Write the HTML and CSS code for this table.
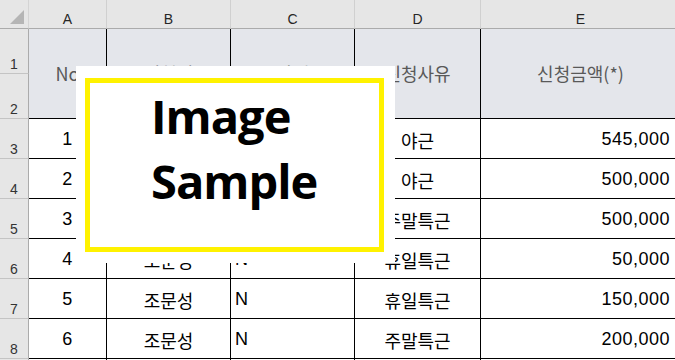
FILE: index.html
```html
<!DOCTYPE html>
<html>
<head>
<meta charset="utf-8">
<link rel="stylesheet" href="styles.css">
</head>
<body>

<!--Sheet-->
<div class="sheet">
  <div class="corner">
    <svg width="16" height="16" viewBox="0 0 16 16"><polygon points="15,1 15,15 1,15" fill="#b5b5b5"/></svg>
  </div>
  <div class="colhead">A</div>
  <div class="colhead">B</div>
  <div class="colhead">C</div>
  <div class="colhead">D</div>
  <div class="colhead">E</div>

  <!--Title rows (merged)-->
  <div class="rownum">1</div>
  <div class="cell hd">No</div>
  <div class="cell hd">신청인</div>
  <div class="cell hd">상태</div>
  <div class="cell hd">신청사유</div>
  <div class="cell hd">신청금액(*)</div>
  <div class="rownum">2</div>

  <!--Data rows-->
  <div class="rownum">3</div>
  <div class="cell center num">1</div>
  <div class="cell center"></div>
  <div class="cell left num"></div>
  <div class="cell center">야근</div>
  <div class="cell right num">545,000</div>

  <div class="rownum">4</div>
  <div class="cell center num">2</div>
  <div class="cell center"></div>
  <div class="cell left num"></div>
  <div class="cell center">야근</div>
  <div class="cell right num">500,000</div>

  <div class="rownum">5</div>
  <div class="cell center num">3</div>
  <div class="cell center"></div>
  <div class="cell left num"></div>
  <div class="cell center">주말특근</div>
  <div class="cell right num">500,000</div>

  <div class="rownum">6</div>
  <div class="cell center num">4</div>
  <div class="cell center">조문성</div>
  <div class="cell left num">N</div>
  <div class="cell center">휴일특근</div>
  <div class="cell right num">50,000</div>

  <div class="rownum">7</div>
  <div class="cell center num">5</div>
  <div class="cell center">조문성</div>
  <div class="cell left num">N</div>
  <div class="cell center">휴일특근</div>
  <div class="cell right num">150,000</div>

  <div class="rownum">8</div>
  <div class="cell center num">6</div>
  <div class="cell center">조문성</div>
  <div class="cell left num">N</div>
  <div class="cell center">주말특근</div>
  <div class="cell right num">200,000</div>

  <!--Next row, only its top edge shows-->
  <div class="rownum"></div>
  <div class="cell"></div>
  <div class="cell"></div>
  <div class="cell"></div>
  <div class="cell"></div>
  <div class="cell"></div>
</div>

<!--Sample image box-->
<div class="sample">
  <div class="sample-frame">
    <div class="sample-text">Image</div>
    <div class="sample-text">Sample</div>
  </div>
</div>

</body>
</html>
```

FILE: styles.css
```css
body {
  margin: 0;
  background-color: #fff;
  overflow: hidden;
  position: relative;
  width: 675px;
  height: 360px;
}

/* The grid of the sheet */
.sheet {
  display: grid;
  grid-template-columns: 29px 78px 124px 124px 126px 200px;
  grid-template-rows: 29px 45px 45px repeat(6, 40px) 1px;
  overflow: hidden;
  font-family: "Liberation Sans", "Noto Sans CJK KR", sans-serif;
}

.sheet > div {
  box-sizing: border-box;
}

/* Top-left corner */
.corner {
  background-color: #e6e6e6;
  border-right: 1px solid #d4d4d4;
  border-bottom: 1px solid #ababab;
  display: flex;
  align-items: flex-end;
  justify-content: flex-end;
  padding: 0 3px 3px 0;
}

.corner svg {
  display: block;
}

/* Column letters */
.colhead {
  background-color: #e6e6e6;
  border-right: 1px solid #d0d0d0;
  border-bottom: 1px solid #ababab;
  color: #262626;
  font-size: 14px;
  display: flex;
  align-items: flex-end;
  justify-content: center;
  padding-bottom: 1px;
}

/* Row numbers */
.rownum {
  grid-column: 1;
  background-color: #e6e6e6;
  border-right: 1px solid #ababab;
  border-bottom: 1px solid #c4c4c4;
  color: #333;
  font-size: 14px;
  display: flex;
  align-items: flex-end;
  justify-content: center;
  padding-bottom: 1px;
}

.cell {
  border-right: 1px solid #000;
  border-bottom: 1px solid #000;
  font-size: 18px;
  color: #000;
  display: flex;
  align-items: center;
  padding-top: 2px;
  white-space: nowrap;
  overflow: hidden;
}

/* Title cells spanning rows 1-2 */
.cell.hd {
  grid-row: span 2;
  background-color: #e4e6eb;
  color: #595959;
  justify-content: center;
  padding-top: 0;
  padding-bottom: 2px;
  font-family: "Noto Sans CJK KR", sans-serif;
}

.center {
  justify-content: center;
}

.left {
  justify-content: flex-start;
  padding-left: 4px;
}

.right {
  justify-content: flex-end;
  padding-right: 10px;
}

.num {
  letter-spacing: 0.5px;
}

/* Sample image box over the sheet */
.sample {
  position: absolute;
  left: 76px;
  top: 66px;
  width: 319px;
  height: 197px;
  box-sizing: border-box;
  padding: 12px 11px 11px 9px;
  background-color: #fff;
}

.sample-frame {
  box-sizing: border-box;
  height: 100%;
  border: 5px solid #fff200;
  padding: 1px 0 0 61px;
}

.sample-text {
  font-family: "Open Sans", sans-serif;
  font-weight: bold;
  font-size: 47px;
  letter-spacing: -1px;
  line-height: 65px;
  color: #000;
}
```
